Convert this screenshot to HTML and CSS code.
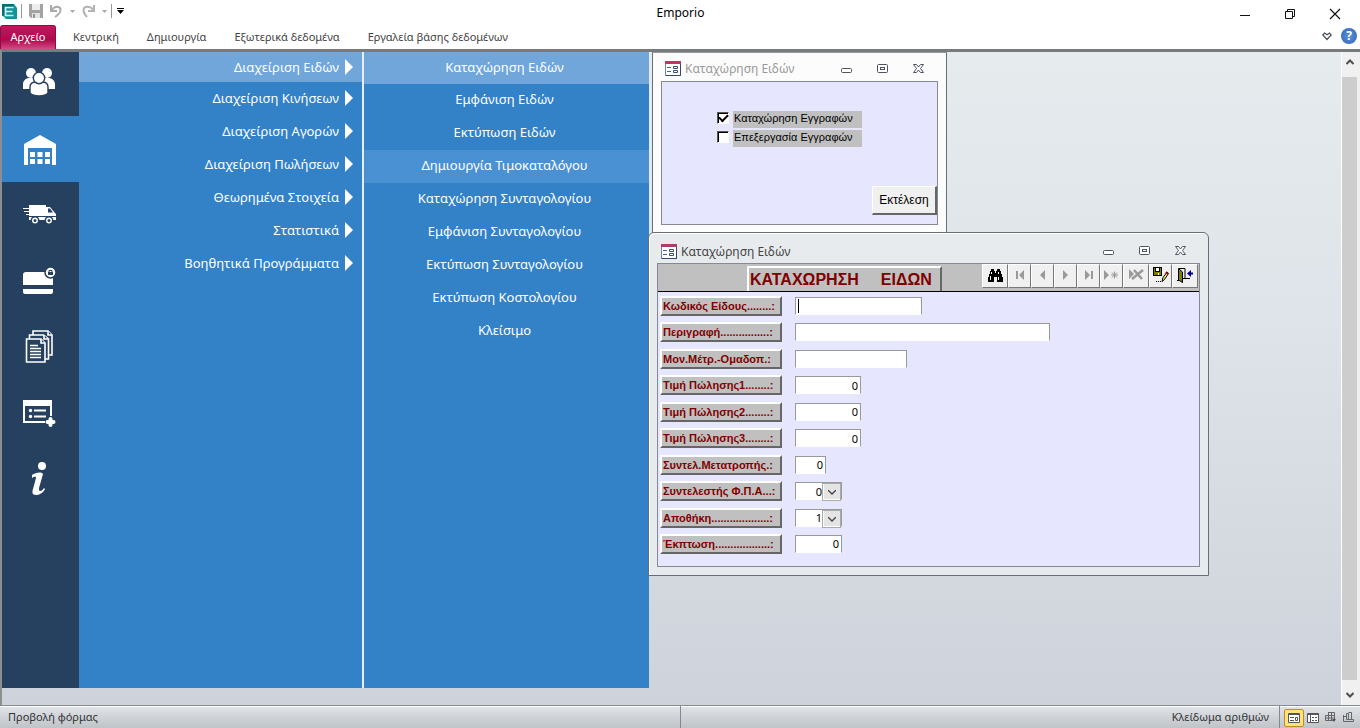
FILE: index.html
```html
<!DOCTYPE html>
<html lang="el">
<head>
<meta charset="utf-8">
<title>Emporio</title>
<link rel="stylesheet" href="styles.css">
</head>
<body>
<svg class="defs" aria-hidden="true">
  <symbol id="form" viewBox="0 0 16 15"><rect x=".5" y=".5" width="15" height="14" fill="#fff" stroke="#6f86b5"/><path d="M0 0h16v3H0z" fill="#b53a67"/><path d="M15.500 3v11.500H1" fill="none" stroke="#35466f"/><path d="M2 6.500h4M2 10.500h4" stroke="#3f63a8"/><path d="M8.500 5.500h4v2h-4zM8.500 9.500h4v2h-4z" fill="#fff" stroke="#3c4c78"/></symbol>
  <symbol id="wmin" viewBox="0 0 12 12"><rect x=".5" y="5.500" width="10" height="4" rx="1" fill="#fff" stroke="#4d5461"/></symbol>
  <symbol id="wmax" viewBox="0 0 12 12"><rect x=".5" y="1.500" width="10" height="8" rx="1" fill="#fff" stroke="#4d5461"/><rect x="3.500" y="4.500" width="4" height="2" fill="#fff" stroke="#4d5461"/></symbol>
  <symbol id="wclose" viewBox="0 0 12 12"><path d="M.500 1.500h3L5.500 4l2-2.500h3L7.500 5.500l3 4h-3L5.500 7l-2 2.500h-3l3-4z" fill="#fff" stroke="#4d5461"/></symbol>
</svg>
<header class="titlebar">
  <div class="quick">
    <svg class="logo" width="17" height="17" viewBox="0 0 17 17"><path d="M1 1h12l3 4v11H5l-4-4z" fill="#10959b"/><path d="M1 1h12l-1 3H4v8l-3 1z" fill="#076e78"/><path d="M12.500 4.500h-8v8h8M4.500 8.500h7" fill="none" stroke="#d8ffff" stroke-width="1.600"/></svg>
    <i class="sep"></i>
    <button aria-label="Save"><svg width="14" height="14" viewBox="0 0 14 14"><path d="M0 0h14v14H2l-2-2z" fill="#a3a3a3"/><path d="M3 0h8v6H3z" fill="#ededed"/><path d="M3 9h8v5H3z" fill="#e2e2e2"/><path d="M4 10h2v4H4z" fill="#929292"/></svg></button>
    <button aria-label="Undo"><svg width="13" height="13" viewBox="0 0 13 13"><path d="M1 0v6h6M1.500 5C5 .500 10 1 10.500 4.500 11 8 8 10 5 12" fill="none" stroke="#aaa" stroke-width="2"/></svg></button>
    <svg width="5" height="3"><path d="M0 0h5L2.500 3z" fill="#aaa"/></svg>
    <button aria-label="Redo"><svg width="13" height="13" viewBox="0 0 13 13"><path d="M12 0v6H6M11.500 5C8 .500 2 1 1.500 5 1.500 8 3 10 5 12" fill="none" stroke="#b4b4b4" stroke-width="2"/></svg></button>
    <svg width="5" height="3"><path d="M0 0h5L2.500 3z" fill="#aaa"/></svg>
    <i class="sep"></i>
    <button class="more" aria-label="Customize"><svg width="7" height="6"><path d="M0 0h7v1H0zM0 2h7L3.500 6z" fill="#000"/></svg></button>
  </div>
  <h1>Emporio</h1>
  <div class="wincontrols">
    <button aria-label="Minimize"><svg width="12" height="12"><path d="M1 7.500h10" stroke="#111"/></svg></button>
    <button aria-label="Restore"><svg width="12" height="12"><path d="M1.500 3.500h7v7h-7zM3.500 3V1.500h7v7H9" fill="none" stroke="#111"/></svg></button>
    <button aria-label="Close"><svg width="12" height="12"><path d="M1 1l10 10M11 1L1 11" stroke="#111" stroke-width="1.200"/></svg></button>
  </div>
</header>
<nav class="ribbon">
  <button class="file">Αρχείο</button>
  <button>Κεντρική</button>
  <button>Δημιουργία</button>
  <button>Εξωτερικά δεδομένα</button>
  <button>Εργαλεία βάσης δεδομένων</button>
  <div class="help">
    <svg width="10" height="9" viewBox="0 0 10 9"><path d="M.800 3L2.500 1 5 2.800 7.500 1 9.200 3 5 7.500z" fill="none" stroke="#4b5058" stroke-width="1.200"/></svg>
    <button class="q" aria-label="Βοήθεια">?</button>
  </div>
</nav>
<main>
  <div class="side">
    <button class="first" aria-label="Πελάτες"><svg width="34" height="30" viewBox="0 0 34 30"><g fill="#fff"><circle cx="9" cy="6" r="5"/><circle cx="25" cy="6" r="5"/><path d="M1 22v-5c0-3 3-6 6-6h5l3 4-6 7zM33 22v-5c0-3-3-6-6-6h-5l-3 4 6 7z"/></g><g fill="#fff" stroke="#264060" stroke-width="1.400"><path d="M8 26v-6c0-4 3-5 6-5h6c3 0 6 1 6 5v6c-3 4-15 4-18 0z"/><circle cx="17" cy="11" r="5.700"/></g></svg></button>
    <button class="on" aria-label="Αποθήκη"><svg width="32" height="30" viewBox="0 0 32 30" fill="#fff"><path d="M0 30V9L16 0l16 9v21h-4V13H4v17z"/><path d="M6 17h5v5H6zM13.500 17h5v5h-5zM21 17h5v5h-5zM6 24h5v5H6zM13.500 24h5v5h-5zM21 24h5v5h-5z"/></svg></button>
    <button aria-label="Παραδόσεις"><svg width="33" height="20" viewBox="0 0 33 20"><path d="M6 0h17v2h4l5 6 1 1v6H6v-5H3V9h3V7H1V6h5V4H0V3h6z" fill="#fff"/><path d="M25 3.500h2l3 4h-5z" fill="#264060"/><path d="M6 11.500h27" stroke="#264060"/><path d="M0 3.500h9M2 6.500h6" stroke="#fff"/><g fill="#fff" stroke="#264060" stroke-width="1.500"><circle cx="12" cy="15.500" r="3.700"/><circle cx="26" cy="15.500" r="3.700"/></g><circle cx="12" cy="15.500" r="1.500" fill="#264060"/><circle cx="26" cy="15.500" r="1.500" fill="#264060"/></svg></button>
    <button aria-label="Πληρωμές"><svg width="33" height="28" viewBox="0 0 33 28"><path d="M0 8q0-3 3-3h27v13H0zM0 22h30v3q0 2-2 2H2q-2 0-2-2z" fill="#fff"/><circle cx="27.500" cy="5.500" r="5.500" fill="#fff" stroke="#264060" stroke-width="1.500"/><path d="M25 5h5v3h-5z" fill="#264060"/><path d="M26 5V3.500h3V5" fill="none" stroke="#264060"/></svg></button>
    <button aria-label="Έγγραφα"><svg width="28" height="34" viewBox="0 0 28 34"><g fill="#264060" stroke="#fff" stroke-width="1.600"><path d="M8 1h15l4 4v20H8z"/><path d="M4.500 5h14l5 4v20h-19z"/><path d="M1.500 9H16l4 4v19H1.500z"/><path d="M16 9v4h4M19 5v4h4M23 1v4h4" /></g><path d="M5 15.500h8M5 18.500h11M5 21.500h11M5 24.500h11M5 27.500h11" stroke="#fff" stroke-width="1.300"/></svg></button>
    <button aria-label="Λίστα"><svg width="33" height="28" viewBox="0 0 33 28"><path d="M0 1h29v16h-2V7H2v15h20v2H0z" fill="#fff"/><path d="M11 11.500h12M11 17.500h12" stroke="#fff" stroke-width="2"/><circle cx="7.500" cy="11.500" r="1.700" fill="#fff"/><circle cx="7.500" cy="17.500" r="1.700" fill="#fff"/><path d="M27.500 20v6M24.500 23h6" stroke="#fff" stroke-width="4" stroke-linecap="round"/></svg></button>
    <button aria-label="Πληροφορίες"><svg width="18" height="34" viewBox="0 0 18 34" fill="#fff"><circle cx="12" cy="4" r="4"/><path d="M2 13c3-2 7-3 10-2l1 1-4 14c0 2 0 3 1 3 2 0 3-2 4-3l1 1c-2 4-6 6-9 6-4 0-4-3-3-6l3-11c0-2-2-1-4 0z"/></svg></button>
  </div>
  <div class="menu groups">
    <button class="hot">Διαχείριση Ειδών</button>
    <button>Διαχείριση Κινήσεων</button>
    <button>Διαχείριση Αγορών</button>
    <button>Διαχείριση Πωλήσεων</button>
    <button>Θεωρημένα Στοιχεία</button>
    <button>Στατιστικά</button>
    <button>Βοηθητικά Προγράμματα</button>
  </div>
  <div class="menu actions">
    <button class="hot">Καταχώρηση Ειδών</button>
    <button>Εμφάνιση Ειδών</button>
    <button>Εκτύπωση Ειδών</button>
    <button class="warm">Δημιουργία Τιμοκαταλόγου</button>
    <button>Καταχώρηση Συνταγολογίου</button>
    <button>Εμφάνιση Συνταγολογίου</button>
    <button>Εκτύπωση Συνταγολογίου</button>
    <button>Εκτύπωση Κοστολογίου</button>
    <button>Κλείσιμο</button>
  </div>
  <div class="scroll">
    <button aria-label="Πάνω"><svg width="8" height="6"><path d="M.500 5L4 1.500 7.500 5" fill="none" stroke="#505050" stroke-width="2"/></svg></button>
    <div class="thumb"></div>
    <button class="down" aria-label="Κάτω"><svg width="8" height="6"><path d="M.500 1L4 4.500 7.500 1" fill="none" stroke="#505050" stroke-width="2"/></svg></button>
  </div>

  <section class="win chooser">
    <header><svg width="16" height="15"><use href="#form"/></svg><h2>Καταχώρηση Ειδών</h2>
      <button aria-label="Minimize"><svg width="12" height="12"><use href="#wmin"/></svg></button><button aria-label="Maximize"><svg width="12" height="12"><use href="#wmax"/></svg></button><button aria-label="Close"><svg width="12" height="12"><use href="#wclose"/></svg></button></header>
    <form class="client">
      <div class="check"><input type="checkbox" id="c1" checked><label for="c1">Καταχώρηση Εγγραφών</label></div>
      <div class="check"><input type="checkbox" id="c2"><label for="c2">Επεξεργασία Εγγραφών</label></div>
      <button type="button" class="run">Εκτέλεση</button>
    </form>
  </section>

  <section class="win entry">
    <header><svg width="16" height="15"><use href="#form"/></svg><h2>Καταχώρηση Ειδών</h2>
      <button aria-label="Minimize"><svg width="12" height="12"><use href="#wmin"/></svg></button><button aria-label="Maximize"><svg width="12" height="12"><use href="#wmax"/></svg></button><button aria-label="Close"><svg width="12" height="12"><use href="#wclose"/></svg></button></header>
    <form class="client">
      <div class="formhead">
        <h3><span>ΚΑΤΑΧΩΡΗΣΗ</span><span>ΕΙΔΩΝ</span></h3>
        <div class="tools">
          <button type="button" class="wide" aria-label="Εύρεση"><svg width="15" height="13" viewBox="0 0 15 13"><path d="M3 0h3v2h1v2h1V2h1V0h3v2h1v3h1v3h1v5H9V8H6v5H0V8h1V5h1V2h1z"/><path d="M3.500 3v2M2.500 7v4M10.500 3v2M10.500 8v3" stroke="#fff"/></svg></button>
          <button type="button" aria-label="Πρώτη"><svg width="10" height="10"><path d="M1 1h2v8H1zM9 0v10L4 5z"/></svg></button>
          <button type="button" aria-label="Προηγούμενη"><svg width="6" height="10"><path d="M5 0v10L0 5z"/></svg></button>
          <button type="button" aria-label="Επόμενη"><svg width="6" height="10"><path d="M0 0v10l5-5z"/></svg></button>
          <button type="button" aria-label="Τελευταία"><svg width="10" height="10"><path d="M7 1h2v8H7zM1 0v10l5-5z"/></svg></button>
          <button type="button" aria-label="Νέα"><svg width="15" height="10"><path d="M0 0v10l5-5z"/><path d="M7 5h7M10.500 1.500v7M8 2.500l5 5M13 2.500l-5 5" stroke="#999"/></svg></button>
          <button type="button" class="wide" aria-label="Διαγραφή"><svg width="15" height="12"><path d="M0 0v10l5-5z"/><path d="M3 10L14 1M5 1l8 9" stroke="#999" stroke-width="2.500"/></svg></button>
          <button type="button" aria-label="Αποθήκευση"><svg width="16" height="16"><path d="M0 0h9v9H0z" fill="#000"/><path d="M1 1h1v4h5V1h1v7H1z" fill="#808000"/><path d="M3 1h3v3H3zM5 6h1v2H5z" fill="#fff"/><path d="M9 14.500l1-4L14 5l1.500 1.500-4 6z" fill="#f5e653" stroke="#000"/><path d="M13 5l2 2" stroke="#8d1010" stroke-width="2"/><path d="M3 14.500h6" stroke="#000" stroke-dasharray="1 1"/></svg></button>
          <button type="button" class="wide" aria-label="Έξοδος"><svg width="16" height="15"><path d="M2 .500h6v10M0 12.500h2M6 10.500h7" fill="none" stroke="#000"/><path d="M1.500 .500L5.500 4v10.500L1.500 12z" fill="#808000" stroke="#000"/><path d="M16 4.500h-2V2L10 5.500 14 9V6.500h2z" fill="#00008b"/></svg></button>
        </div>
      </div>
      <div class="fields">
        <div><label for="f1">Κωδικός Είδους........:</label><input id="f1" class="w127" value=""><i class="caret"></i></div>
        <div><label for="f2">Περιγραφή................:</label><input id="f2" class="w255"></div>
        <div><label for="f3">Μον.Μέτρ.-Ομαδοπ.:</label><input id="f3" class="w112"></div>
        <div><label for="f4">Τιμή Πώλησης1........:</label><input id="f4" class="w66" value="0"></div>
        <div><label for="f5">Τιμή Πώλησης2........:</label><input id="f5" class="w66" value="0"></div>
        <div><label for="f6">Τιμή Πώλησης3........:</label><input id="f6" class="w66" value="0"></div>
        <div><label for="f7">Συντελ.Μετατροπής.:</label><input id="f7" class="w31" value="0"></div>
        <div><label for="f8">Συντελεστής Φ.Π.Α...:</label><span class="combo"><select id="f8"><option>0</option></select><svg width="8" height="5"><path d="M0 0l4 4 4-4" fill="none" stroke="#444" stroke-width="1.300"/></svg></span></div>
        <div><label for="f9">Αποθήκη...................:</label><span class="combo"><select id="f9"><option>1</option></select><svg width="8" height="5"><path d="M0 0l4 4 4-4" fill="none" stroke="#444" stroke-width="1.300"/></svg></span></div>
        <div><label for="f10">Έκπτωση..................:</label><input id="f10" class="w47" value="0"></div>
      </div>
    </form>
  </section>
</main>
<footer>
  <span class="view">Προβολή φόρμας</span>
  <div class="right">
    <span class="lock">Κλείδωμα αριθμών</span>
    <div class="views">
      <button class="sel" aria-label="Προβολή φόρμας"><svg width="12" height="10"><path d="M.500.500h11v9H.500z" fill="#fff" stroke="#555"/><path d="M0 1.500h12M2 4.500h4M2 7.500h4M7.500 4.500h2v3h-2z" fill="none" stroke="#555"/></svg></button>
      <button aria-label="Φύλλο δεδομένων"><svg width="12" height="10"><path d="M.500.500h11v9H.500z" fill="#fff" stroke="#555"/><path d="M0 1.500h12M3.500 2v8M5 4.500h2M8 4.500h2M5 7.500h2M8 7.500h2" fill="none" stroke="#555"/></svg></button>
      <button aria-label="Διάταξη"><svg width="12" height="11"><path d="M3.500.500h6v8h-9v-5h9M3.500 0v9M6.500 0v9M0 6h10" fill="none" stroke="#666"/><path d="M7 7h4l-2 3z" fill="#555"/></svg></button>
      <button aria-label="Σχεδίαση"><svg width="12" height="11"><path d="M.500 3v6.500h10V7.500h-7V1.500h2v6M5.500 .500h3v7M.500 4.500h3" fill="none" stroke="#666"/></svg></button>
    </div>
  </div>
</footer>
</body>
</html>
```
FILE: styles.css
```css
* { box-sizing: border-box; }
body { margin: 0; height: 100vh; display: flex; flex-direction: column; overflow: hidden; background: #fff; font-family: "Noto Sans", sans-serif; font-size: 11px; color: #444; }
button { border: 0; padding: 0; background: none; font: inherit; color: inherit; }
h1, h2, h3 { margin: 0; font-weight: normal; }
svg { flex: none; display: block; }
.defs { position: absolute; width: 0; height: 0; }

.titlebar { height: 25px; display: grid; grid-template-columns: 1fr auto 1fr; align-items: center; }
.titlebar h1 { font-size: 12px; color: #000; padding-left: 1px; }
.quick { display: flex; align-items: center; gap: 7px; padding: 0 0 3px 1px; }
.quick .sep { width: 1px; height: 14px; background: #999; margin: 0 -3px; }
.quick .sep + button { margin-left: 3px; }
.quick .logo + .sep { margin-left: -4px; }
.quick .sep + .more { margin-left: 1px; }
.wincontrols { display: flex; justify-content: flex-end; gap: 33px; padding-right: 19px; padding-top: 3px; }

.ribbon { height: 24px; display: flex; }
.ribbon > button { padding: 0 14px 2px; }
.ribbon .file { width: 56px; padding: 0 0 2px; margin-right: 3px; color: #fff; border: 1px solid #8f0a43; border-bottom: 0; border-radius: 3px 3px 0 0; background: linear-gradient(#c2185f, #ad0a4c 60%, #d44a85); }
.help { margin-left: auto; display: flex; align-items: center; gap: 9px; padding: 0 3px 2px 0; }
.q { width: 16px; height: 16px; border-radius: 50%; background: radial-gradient(#5d93dd, #2e62b7); color: #fff; font-weight: bold; font-size: 12px; line-height: 16px; }

main { flex: 1; min-height: 0; position: relative; display: flex; border-top: 3px solid #777b80; border-left: 2px solid #8e8e8e; background: linear-gradient(#e6ebee, #dfe4ea 40%, #d5dae1 75%, #ced3db); }
.side { width: 77px; margin-bottom: 17px; background: #264060; display: flex; flex-direction: column; }
.side button { height: 66px; display: flex; align-items: center; justify-content: center; padding: 0 3px 0 0; }
.side .first { height: 64px; padding-bottom: 4px; }
.side .on { background: #3381c7; padding: 2px 2px 0 0; }
.menu { margin-bottom: 17px; background: #3381c7; display: flex; flex-direction: column; font-size: 13px; color: #fff; }
.menu button { height: 33px; padding: 0 4px 3px 0; }
.menu .hot { background: #70a6da; }
.menu .warm { background: #4a91d3; }
.groups { width: 285px; border-right: 2px solid #e8eef5; }
.menu.groups button { display: flex; align-items: center; justify-content: flex-end; gap: 6px; padding: 0 9px 1px 0; }
.menu.groups .hot { height: 30px; }
.groups button::after { content: ""; border: solid transparent; border-width: 8px 0 8px 8px; border-left-color: #fff; }
.actions { width: 285px; }
.menu.actions .hot { height: 32px; padding-bottom: 2px; }
.scroll { margin-left: auto; width: 19px; padding-right: 3px; border-left: 1px solid #fff; background: #f0f0f0; display: flex; flex-direction: column; }
.scroll button { height: 25px; display: flex; align-items: center; justify-content: center; padding-bottom: 6px; }
.scroll .down { padding: 5px 0 0; }
.thumb { flex: 1; background: #cdcdcd; }

.win { position: absolute; border: 1px solid #686e78; }
.win > header { height: 28px; display: flex; align-items: center; gap: 4px; padding: 4px 13px 0 4px; }
.win h2 { flex: 1; font-size: 12px; }
.win > header button { width: 12px; margin-left: 20px; }
.client { border: 1px solid #858994; background: #e6e6ff; color: #000; }
.chooser { left: 650px; top: 0; width: 295px; padding: 0 8px 8px; background: #fcfcfc; border-top-color: #999; color: #999; }
.chooser > header { padding-top: 3px; }
.chooser .client { height: 144px; padding: 29px 0 9px; display: flex; flex-direction: column; font-family: "Liberation Sans", sans-serif; font-size: 11px; }
.check { display: flex; align-items: center; gap: 4px; margin: 0 0 2px 55px; }
.check label { width: 129px; height: 17px; line-height: 15px; padding-left: 1px; background: #c0c0c0; white-space: nowrap; }
.check input { appearance: none; width: 12px; height: 12px; margin: 0 0 3px; background: #fff; border: 1px solid #fff; border-top-color: #555; border-left-color: #555; box-shadow: inset 1px 1px #000; display: grid; place-items: center; }
.check input:checked::after { content: ""; width: 7px; height: 4px; border: solid #000; border-width: 0 0 2px 2px; rotate: -45deg; margin-bottom: 2px; }
.run { margin: auto 0 0 auto; width: 65px; height: 29px; font-size: 12px; background: #f0f0f0; border: 1px solid #fff; border-right: 2px solid #666; border-bottom: 2px solid #666; }

.entry { left: 646px; top: 180px; width: 561px; padding: 0 8px 8px; background: #e8ebee; border-radius: 6px 6px 0 0; box-shadow: inset 1px 1px #fff; color: #444; }
.entry > header { height: 30px; padding-top: 6px; }
.formhead { height: 28px; display: flex; background: #c0c0c0; border-bottom: 1px solid #000; padding-left: 89px; }
.formhead h3 { width: 195px; margin-top: 2px; padding-left: 1px; border: solid #fff; border-width: 2px 2px 0 2px; border-right-color: #666; color: #800000; font: bold 16px/24px "Liberation Sans", sans-serif; display: flex; gap: 22px; }
.tools { margin-left: auto; margin-right: 1px; display: flex; height: 24px; }
.tools button { width: 23px; display: grid; place-items: center; background: #f0f0f0; border: 1px solid #fff; border-right-color: #777; border-bottom: 1px solid #777; padding-bottom: 2px; fill: #999; }
.tools .wide { width: 26px; }
.tools .wide:first-child { fill: #000; }
.fields { height: 274px; padding: 4px 0 12px 2px; display: flex; flex-direction: column; justify-content: space-between; font-family: "Liberation Sans", sans-serif; }
.fields > div { position: relative; display: flex; align-items: center; }
.fields label { width: 122px; height: 20px; line-height: 16px; margin-right: 13px; padding-left: 1px; border: 2px solid #fff; border-right-color: #666; border-bottom-color: #666; background: #c0c0c0; color: #800000; font-weight: bold; white-space: nowrap; overflow: hidden; }
.fields input, .combo { height: 18px; background: #fff; border: 1px solid #999; border-bottom-color: #fff; font: 11px "Noto Sans", sans-serif; color: #000; text-align: right; padding: 0 2px; }
.w127 { width: 127px; } .w255 { width: 255px; } .w112 { width: 112px; } .w66 { width: 66px; } .w31 { width: 31px; } .w47 { width: 47px; }
.caret { position: absolute; left: 138px; top: 3px; width: 1px; height: 14px; background: #000; }
.fields .combo { width: 47px; padding: 0; position: relative; display: flex; }
.combo select { appearance: none; border: 0; padding: 0 19px 0 0; margin: 0; width: 100%; background: linear-gradient(#e4e4e4, #e4e4e4) right / 17px no-repeat; font: inherit; color: #000; text-align: right; text-align-last: right; }
.combo::after { content: ""; position: absolute; right: 0; top: 0; width: 17px; height: 16px; border: 1px solid #aaa; pointer-events: none; }
.combo svg { position: absolute; right: 5px; top: 7px; pointer-events: none; }

footer { height: 23px; display: grid; grid-template-columns: 1fr 1fr; align-items: center; border-top: 1px solid #888c92; box-shadow: inset 0 1px #fff; background: linear-gradient(#e1e4e8, #bfc4c9); color: #333; }
.view { padding: 0 0 1px 8px; }
.right { display: flex; align-self: stretch; border-left: 1px solid #888; }
.lock { flex: 1; display: flex; align-items: center; justify-content: flex-end; padding: 0 10px 1px 0; }
.views { display: flex; align-items: center; border-left: 1px solid #888; padding: 1px 2px 0 4px; }
.views button { width: 18px; height: 18px; display: grid; place-items: center; border: 1px solid transparent; }
.views .sel { width: 20px; background: #ffe27a; border-color: #c28a30; border-radius: 2px; }
```
